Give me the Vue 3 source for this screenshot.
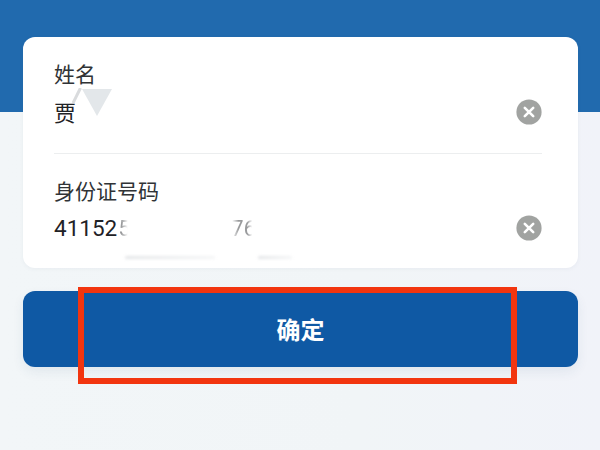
<script setup>
const fields = [
  { label: '姓名', value: '贾', key: 'name' },
  { label: '身份证号码', value: '41152', key: 'id' }
]
</script>

<template>
  <div class="page">
    <div class="hero"></div>
    <main class="content">
      <section class="card">
        <div v-for="f in fields" :key="f.key" class="field" :class="'field-' + f.key">
          <div class="label">{{ f.label }}</div>
          <div class="row">
            <div class="value">
              <span>{{ f.value }}</span><span v-if="f.key === 'id'" class="fade5">5</span><span v-if="f.key === 'id'" class="fade76">76</span>
            </div>
            <svg class="clear" viewBox="0 0 26 26" width="26" height="26">
              <circle cx="13" cy="13" r="12.6" fill="#a1a3a1" />
              <path d="M8.8 8.8 17.2 17.2M17.2 8.8 8.8 17.2" stroke="#fff" stroke-width="2.6" stroke-linecap="round" />
            </svg>
          </div>
        </div>
        <svg class="tri" viewBox="0 0 30 28" width="30" height="28">
          <path d="M0 0H30L15 27Z" fill="#e3e7ea" />
        </svg>
        <svg class="slash" viewBox="0 0 10 16" width="10" height="16">
          <path d="M8.5 0 1 15" stroke="#d9dbdd" stroke-width="3" />
        </svg>
        <i class="smudge s1"></i>
        <i class="smudge s2"></i>
      </section>
      <button class="confirm" type="button">确定</button>
    </main>
    <div class="annotation"></div>
  </div>
</template>

<style scoped>
.page {
  position: relative;
  width: 600px;
  height: 450px;
  overflow: hidden;
  background: linear-gradient(90deg, #f2f6f8, #f1f5f7 60%, #f1f3f9);
  font-family: "Noto Sans CJK SC", "Liberation Sans", sans-serif;
}
.hero {
  height: 112px;
  background: #216aae;
}
.content {
  display: flex;
  flex-direction: column;
  gap: 23px;
  margin-top: -75px;
  padding: 0 22px 0 23px;
}
.card {
  position: relative;
  height: 231px;
  box-sizing: border-box;
  padding: 0 36px 0 31px;
  background: #fff;
  border-radius: 12px;
  box-shadow: 0 1px 4px rgba(60, 90, 120, 0.06);
}
.field {
  box-sizing: border-box;
  padding-top: 21px;
}
.field-name {
  height: 117px;
  border-bottom: 1px solid #eceeef;
}
.label {
  height: 30px;
  font-size: 21px;
  line-height: 30px;
  color: #303336;
}
.row {
  display: flex;
  align-items: center;
  justify-content: space-between;
  height: 30px;
  margin-top: 8px;
}
.value {
  display: flex;
  font-size: 22.5px;
  line-height: 30px;
  color: #1f2226;
  font-family: Roboto, "Noto Sans CJK SC", sans-serif;
  white-space: pre;
}
.field-name .value {
  font-size: 22px;
  font-family: "Noto Sans CJK SC", sans-serif;
}
.fade5 {
  margin-left: 1px;
  -webkit-mask-image: linear-gradient(90deg, rgba(0, 0, 0, 0.7), transparent 75%);
  mask-image: linear-gradient(90deg, rgba(0, 0, 0, 0.7), transparent 75%);
}
.fade76 {
  margin-left: 100px;
  opacity: 0.45;
  -webkit-mask-image: linear-gradient(90deg, transparent 5%, #000 30%, #000 65%, transparent 85%);
  mask-image: linear-gradient(90deg, transparent 5%, #000 30%, #000 65%, transparent 85%);
}
.clear {
  flex: none;
}
.field-name .clear {
  margin-top: 2px;
}
.tri {
  position: absolute;
  left: 59px;
  top: 52px;
}
.slash {
  position: absolute;
  left: 49px;
  top: 51px;
}
.smudge {
  position: absolute;
  height: 3px;
  border-radius: 3px;
  background: linear-gradient(90deg, #e3e5e7, #f4f5f6);
  filter: blur(1.5px);
}
.s1 {
  left: 102px;
  top: 219px;
  width: 90px;
}
.s2 {
  left: 235px;
  top: 219px;
  width: 34px;
}
.confirm {
  height: 76px;
  border: 0;
  padding: 0 0 2px;
  border-radius: 12px;
  background: #0f59a4;
  box-shadow: 0 5px 12px rgba(40, 80, 120, 0.08);
  color: #fff;
  font-family: inherit;
  font-size: 24px;
  font-weight: 700;
}
.annotation {
  position: absolute;
  left: 78px;
  top: 287px;
  width: 439px;
  height: 97px;
  box-sizing: border-box;
  border: 6.5px solid #f2350f;
}
</style>
